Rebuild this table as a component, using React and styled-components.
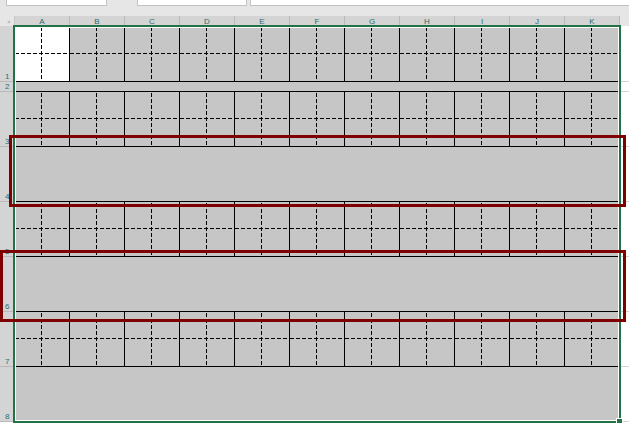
import React from 'react';
import styled, { createGlobalStyle } from 'styled-components';

const COLS = ['A', 'B', 'C', 'D', 'E', 'F', 'G', 'H', 'I', 'J', 'K'];
const COL_W = 55;
const HEAD_W = 15;
const GREEN = '#217346';
const FILL = '#c6c6c6';

// each row: label, height (incl. bottom line), kind
const ROWS = [
  { label: '1', height: 56, grid: true, mid: 27 },
  { label: '2', height: 10, grid: false },
  { label: '3', height: 55, grid: true, mid: 26 },
  { label: '4', height: 55, grid: false },
  { label: '5', height: 55, grid: true, mid: 26 },
  { label: '6', height: 55, grid: false },
  { label: '7', height: 55, grid: true, mid: 26 },
  { label: '8', height: 55, grid: false },
];

const GlobalStyle = createGlobalStyle`
  html, body {
    margin: 0;
    padding: 0;
    background: #ffffff;
    font-family: 'Liberation Sans', Arial, sans-serif;
    overflow: hidden;
  }
`;

const Page = styled.div`
  position: relative;
  width: 629px;
  height: 423px;
  overflow: hidden;
  background: #ffffff;
`;

const Toolbar = styled.div`
  display: flex;
  align-items: flex-start;
  height: 16px;
  background: #e6e6e6;
  padding-left: 6px;
`;

const Field = styled.div`
  box-sizing: border-box;
  height: 6px;
  width: ${({ width }) => (width ? `${width}px` : 'auto')};
  flex: ${({ width }) => (width ? 'none' : '1')};
  margin-left: ${({ offset }) => offset || 0}px;
  background: #ffffff;
  border: 1px solid #c3c3c3;
  border-top: none;
  margin-right: ${({ width }) => (width ? 0 : -4)}px;
`;

const HeaderRow = styled.div`
  display: flex;
  height: 10px;
`;

const Corner = styled.div`
  position: relative;
  box-sizing: border-box;
  width: ${HEAD_W}px;
  background: #e6e6e6;
  border-right: 1px solid #c8c8c8;

  &::after {
    content: '';
    position: absolute;
    right: 4px;
    bottom: 3px;
    width: 0;
    height: 0;
    border-left: 3px solid transparent;
    border-bottom: 3px solid #b4b4b4;
  }
`;

const ColHeader = styled.div`
  box-sizing: border-box;
  width: ${COL_W}px;
  display: flex;
  align-items: flex-end;
  justify-content: center;
  background: #d4d4d4;
  border-right: 1px solid #b9b9b9;
  color: #2a6f6a;
  font-size: 8px;
  line-height: 9px;
`;

const HeaderFiller = styled.div`
  flex: 1;
  background: #e6e6e6;
`;

const Row = styled.div`
  display: flex;
  height: ${({ height }) => height}px;
`;

const RowHeader = styled.div`
  box-sizing: border-box;
  width: ${HEAD_W}px;
  display: flex;
  align-items: flex-end;
  padding-left: 5px;
  background: #d4d4d4;
  border-bottom: 1px solid #b9b9b9;
  color: #2a6f6a;
  font-size: 8px;
  line-height: 9px;
`;

const Cell = styled.div`
  box-sizing: border-box;
  width: ${COL_W}px;
  height: 100%;
  border-right: 1px solid #000000;
  border-bottom: 1px solid #000000;
  background-color: ${({ white }) => (white ? '#ffffff' : FILL)};
  background-image: linear-gradient(to bottom, #000 4px, transparent 4px),
    linear-gradient(to right, #000 4px, transparent 4px);
  background-size: 1px 6px, 6px 1px;
  background-repeat: repeat-y, repeat-x;
  background-position: 26px 1px, 0 ${({ mid }) => mid}px;
`;

const Band = styled.div`
  box-sizing: border-box;
  width: ${COL_W * COLS.length}px;
  height: 100%;
  background: ${FILL};
  border-bottom: 1px solid #000000;
`;

const Spare = styled.div`
  box-sizing: border-box;
  flex: 1;
  height: 100%;
  background: #ffffff;
  border-bottom: 1px solid #d4d4d4;
`;

const Selection = styled.div`
  position: absolute;
  left: 13px;
  top: 25px;
  width: 608px;
  height: 398px;
  box-sizing: border-box;
  border: 2px solid ${GREEN};
  box-shadow: inset 0 0 0 1px #ffffff;
  pointer-events: none;
`;

const FillHandle = styled.div`
  position: absolute;
  left: 616px;
  top: 418px;
  width: 5px;
  height: 5px;
  background: ${GREEN};
  border: 1px solid #ffffff;
`;

const Highlight = styled.div`
  position: absolute;
  left: ${({ x }) => x}px;
  top: ${({ y }) => y}px;
  width: ${({ w }) => w}px;
  height: 72px;
  box-sizing: border-box;
  border: 3px solid #7f0000;
  pointer-events: none;
`;

function SheetRow({ row, index }) {
  return (
    <Row height={row.height}>
      <RowHeader>{row.label}</RowHeader>
      {row.grid ? (
        COLS.map((c, i) => (
          <Cell key={c} mid={row.mid} white={index === 0 && i === 0} />
        ))
      ) : (
        <Band />
      )}
      <Spare />
    </Row>
  );
}

export default function App() {
  return (
    <Page>
      <GlobalStyle />
      <Toolbar>
        <Field width={101} />
        <Field width={110} offset={30} />
        <Field offset={3} />
      </Toolbar>
      <HeaderRow>
        <Corner />
        {COLS.map((c) => (
          <ColHeader key={c}>{c}</ColHeader>
        ))}
        <HeaderFiller />
      </HeaderRow>
      {ROWS.map((row, i) => (
        <SheetRow key={row.label} row={row} index={i} />
      ))}
      <Selection />
      <FillHandle />
      <Highlight x={9} y={135} w={617} />
      <Highlight x={0} y={250} w={626} />
    </Page>
  );
}
